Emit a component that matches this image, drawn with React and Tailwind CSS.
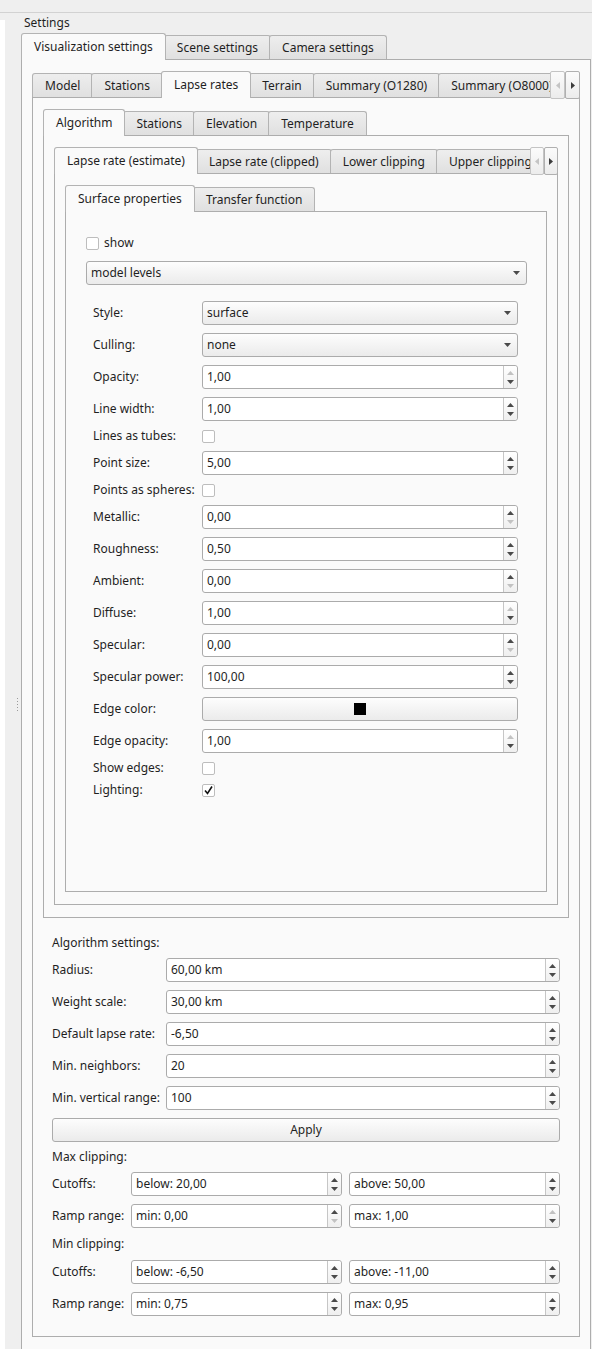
import React from 'react';

// ---------- small widgets ----------
function Tri({ dir = 'down', off = false }) {
  const d = dir === 'up' ? 'M0 4 L3.5 0 L7 4 Z' : 'M0 0 L7 0 L3.5 4 Z';
  return (
    <svg width="7" height="4" viewBox="0 0 7 4" className="block">
      <path d={d} fill={off ? '#c2c2c2' : '#4a4a4a'} />
    </svg>
  );
}

function SpinBox({ value, upOff = false, downOff = false, className = '' }) {
  return (
    <div className={`flex h-[24px] border border-[#ababab] rounded-[3px] bg-white ${className}`}>
      <div className="flex-1 min-w-0 flex items-center pl-[4px] whitespace-nowrap overflow-hidden">{value}</div>
      <div className="w-[14px] flex-none border-l border-[#c6c6c6] rounded-r-[3px] bg-gradient-to-b from-white to-[#efefef] flex flex-col items-center justify-center gap-[5px]">
        <Tri dir="up" off={upOff} />
        <Tri dir="down" off={downOff} />
      </div>
    </div>
  );
}

function Combo({ value, className = '' }) {
  return (
    <div className={`flex items-center h-[24px] border border-[#ababab] rounded-[3px] bg-gradient-to-b from-[#fdfdfd] to-[#ebebeb] pl-[4px] pr-[6px] ${className}`}>
      <span className="flex-1">{value}</span>
      <Tri />
    </div>
  );
}

function Button({ children, className = '' }) {
  return (
    <div className={`flex items-center justify-center h-[24px] border border-[#ababab] rounded-[3px] bg-gradient-to-b from-[#fdfdfd] to-[#ebebeb] ${className}`}>
      {children}
    </div>
  );
}

function Check({ checked = false }) {
  return (
    <div className="w-[13px] h-[13px] flex-none border border-[#bdbdbd] rounded-[2px] bg-white flex items-center justify-center">
      {checked && (
        <svg width="11" height="11" viewBox="0 0 11 11">
          <path d="M2 5.5 L4.5 8.5 L9 1.5" fill="none" stroke="#111" strokeWidth="1.6" />
        </svg>
      )}
    </div>
  );
}

// ---------- tabs ----------
// neighbouring tabs overlap by 2px, like the Fusion style
const tabBase = 'flex-none flex items-center px-3 border border-b-0 border-[#b3b3b3] rounded-t-[3px] -ml-[2px] first:ml-0 whitespace-nowrap';

function Tab({ label, active }) {
  if (active) {
    return <div className={`${tabBase} h-[27px] -mb-px relative z-10 bg-[#fafafa]`}>{label}</div>;
  }
  return <div className={`${tabBase} h-[24px] bg-gradient-to-b from-[#eeeeee] to-[#e0e0e0]`}>{label}</div>;
}

function ScrollButtons({ w = 'w-[15px]' }) {
  return (
    <div className="flex flex-none self-start relative z-10">
      <div className={`${w} h-[28px] border border-[#c4c4c4] rounded-[2px] bg-gradient-to-b from-[#fbfbfb] to-[#ececec] flex items-center justify-center`}>
        <svg width="4" height="7" viewBox="0 0 4 7"><path d="M4 0 L0 3.5 L4 7 Z" fill="#c4c4c4" /></svg>
      </div>
      <div className={`${w} h-[28px] border border-[#b0b0b0] rounded-[2px] bg-gradient-to-b from-[#fbfbfb] to-[#ececec] flex items-center justify-center`}>
        <svg width="4" height="7" viewBox="0 0 4 7"><path d="M0 0 L4 3.5 L0 7 Z" fill="#3c3c3c" /></svg>
      </div>
    </div>
  );
}

function TabWidget({ tabs, active, scroll, scrollW, paneClass = '', children }) {
  return (
    <div className="flex flex-col">
      <div className="flex h-[26px]">
        <div className="flex flex-1 min-w-0 h-[26px] items-end overflow-x-clip">
          {tabs.map((t) => (
            <Tab key={t} label={t} active={t === active} />
          ))}
        </div>
        {scroll && <ScrollButtons w={scrollW} />}
      </div>
      <div className={`border border-[#adadad] bg-[#fafafa] ${paneClass}`}>{children}</div>
    </div>
  );
}

// ---------- surface properties ----------
const surfaceRows = [
  { label: 'Style:', kind: 'combo', value: 'surface' },
  { label: 'Culling:', kind: 'combo', value: 'none' },
  { label: 'Opacity:', kind: 'spin', value: '1,00', upOff: true },
  { label: 'Line width:', kind: 'spin', value: '1,00' },
  { label: 'Lines as tubes:', kind: 'check' },
  { label: 'Point size:', kind: 'spin', value: '5,00' },
  { label: 'Points as spheres:', kind: 'check' },
  { label: 'Metallic:', kind: 'spin', value: '0,00', downOff: true },
  { label: 'Roughness:', kind: 'spin', value: '0,50' },
  { label: 'Ambient:', kind: 'spin', value: '0,00', downOff: true },
  { label: 'Diffuse:', kind: 'spin', value: '1,00', upOff: true },
  { label: 'Specular:', kind: 'spin', value: '0,00', downOff: true },
  { label: 'Specular power:', kind: 'spin', value: '100,00' },
  { label: 'Edge color:', kind: 'color' },
  { label: 'Edge opacity:', kind: 'spin', value: '1,00', upOff: true },
  { label: 'Show edges:', kind: 'check' },
  { label: 'Lighting:', kind: 'check', checked: true },
];

function SurfaceRow({ row }) {
  const isCheck = row.kind === 'check';
  let field = null;
  if (row.kind === 'combo') field = <Combo value={row.value} className="flex-1" />;
  if (row.kind === 'spin') field = <SpinBox value={row.value} upOff={row.upOff} downOff={row.downOff} className="flex-1" />;
  if (row.kind === 'check') field = <Check checked={row.checked} />;
  if (row.kind === 'color')
    field = (
      <Button className="flex-1">
        <div className="w-[12px] h-[12px] bg-black" />
      </Button>
    );
  return (
    <div className={`flex items-center ${isCheck ? 'h-[14px]' : 'h-[24px]'}`}>
      <div className="w-[109px] flex-none whitespace-nowrap">{row.label}</div>
      <div className="flex-1 min-w-0 flex">{field}</div>
    </div>
  );
}

function SurfaceProperties() {
  return (
    <div>
      <div className="flex items-center gap-[5px] h-[18px]">
        <Check />
        <span>show</span>
      </div>
      <Combo value="model levels" className="mt-[9px]" />
      <div className="mt-[16px] pl-[7px] pr-[9px] flex flex-col gap-[8px]">
        {surfaceRows.map((r) => (
          <SurfaceRow key={r.label} row={r} />
        ))}
      </div>
    </div>
  );
}

// ---------- algorithm settings ----------
function FieldRow({ label, children, w = 'w-[114px]' }) {
  return (
    <div className="flex items-center h-[24px]">
      <div className={`${w} flex-none whitespace-nowrap`}>{label}</div>
      <div className="flex-1 min-w-0 flex gap-[7px]">{children}</div>
    </div>
  );
}

function AlgorithmSettings() {
  return (
    <div className="mt-[18px] pl-[9px] pr-[9px] pb-[8px] flex flex-col gap-[8px]">
      <div className="h-[14px] flex items-center">Algorithm settings:</div>
      <FieldRow label="Radius:"><SpinBox value="60,00 km" className="flex-1" /></FieldRow>
      <FieldRow label="Weight scale:"><SpinBox value="30,00 km" className="flex-1" /></FieldRow>
      <FieldRow label="Default lapse rate:"><SpinBox value="-6,50" className="flex-1" /></FieldRow>
      <FieldRow label="Min. neighbors:"><SpinBox value="20" className="flex-1" /></FieldRow>
      <FieldRow label="Min. vertical range:"><SpinBox value="100" className="flex-1" /></FieldRow>
      <Button>Apply</Button>
      <div className="h-[14px] flex items-center">Max clipping:</div>
      <FieldRow label="Cutoffs:" w="w-[79px]">
        <SpinBox value="below: 20,00" className="flex-1" />
        <SpinBox value="above: 50,00" className="flex-1" />
      </FieldRow>
      <FieldRow label="Ramp range:" w="w-[79px]">
        <SpinBox value="min: 0,00" downOff className="flex-1" />
        <SpinBox value="max: 1,00" upOff className="flex-1" />
      </FieldRow>
      <div className="h-[16px] flex items-center">Min clipping:</div>
      <FieldRow label="Cutoffs:" w="w-[79px]">
        <SpinBox value="below: -6,50" className="flex-1" />
        <SpinBox value="above: -11,00" className="flex-1" />
      </FieldRow>
      <FieldRow label="Ramp range:" w="w-[79px]">
        <SpinBox value="min: 0,75" className="flex-1" />
        <SpinBox value="max: 0,95" className="flex-1" />
      </FieldRow>
    </div>
  );
}

// ---------- App ----------
const pane = 'pt-[11px] pb-[12px] px-[10px]';

export default function App() {
  return (
    <div className="w-[592px] h-[1349px] overflow-hidden bg-[#efefef] font-['Noto_Sans',sans-serif] text-[12px] leading-[16px] text-[#1f1f1f]">
      <div className="h-[13px] border-b border-[#d2d2d2]" />
      <div className="flex h-[1336px]">
        <div className="w-[5px] flex-none mt-[7px] bg-white" />
        <div className="w-[16px] flex-none flex flex-col items-center pl-[8px] pt-[685px] gap-[2px]">
          <div className="w-px h-px bg-[#9a9a9a]" />
          <div className="w-px h-px bg-[#9a9a9a]" />
          <div className="w-px h-px bg-[#9a9a9a]" />
          <div className="w-px h-px bg-[#9a9a9a]" />
          <div className="w-px h-px bg-[#9a9a9a]" />
        </div>
        <div className="flex-1 min-w-0 mr-px">
          <div className="h-[20px] pl-[3px] flex items-center">Settings</div>
          <TabWidget
            tabs={['Visualization settings', 'Scene settings', 'Camera settings']}
            active="Visualization settings"
            paneClass={pane}
          >
            <TabWidget
              tabs={['Model', 'Stations', 'Lapse rates', 'Terrain', 'Summary (O1280)', 'Summary (O8000)']}
              active="Lapse rates"
              scroll
              scrollW="w-[15px]"
              paneClass={pane}
            >
              <TabWidget
                tabs={['Algorithm', 'Stations', 'Elevation', 'Temperature']}
                active="Algorithm"
                paneClass={pane}
              >
                <TabWidget
                  tabs={['Lapse rate (estimate)', 'Lapse rate (clipped)', 'Lower clipping', 'Upper clipping']}
                  active="Lapse rate (estimate)"
                  scroll
                  scrollW="w-[14px]"
                  paneClass={pane}
                >
                  <TabWidget
                    tabs={['Surface properties', 'Transfer function']}
                    active="Surface properties"
                    paneClass="h-[681px] pt-[22px] pl-[20px] pr-[19px]"
                  >
                    <SurfaceProperties />
                  </TabWidget>
                </TabWidget>
              </TabWidget>
              <AlgorithmSettings />
            </TabWidget>
          </TabWidget>
        </div>
      </div>
    </div>
  );
}
